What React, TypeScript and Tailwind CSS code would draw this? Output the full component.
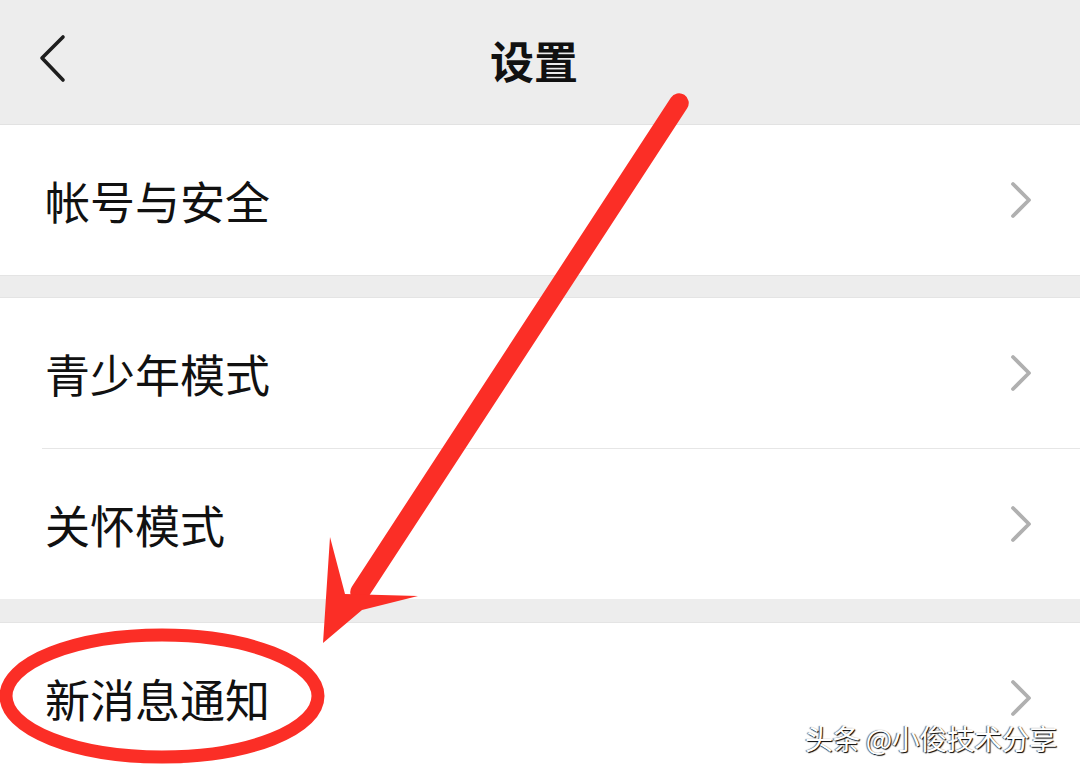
const font = { fontFamily: '"Noto Sans CJK SC", "Noto Sans", sans-serif' };

const Chevron = () => (
  <svg width="24" height="40" viewBox="0 0 24 40">
    <path d="M4 4 L20 20 L4 36" fill="none" stroke="#b0b0b0" strokeWidth="3.8" strokeLinecap="round" strokeLinejoin="round" />
  </svg>
);

const Row = ({ label }: { label: string }) => (
  <div className="h-[150px] bg-white flex items-center justify-between pl-[45px] pr-[47px]">
    <span className="text-[45px] text-[#111] leading-none">{label}</span>
    <Chevron />
  </div>
);

const App = () => {
  return (
    <div className="relative w-[1080px] h-[773px] overflow-hidden bg-[#ededed]" style={font}>
      <header className="h-[125px] bg-[#ededed] border-b border-[#e2e2e2] flex items-center justify-center relative">
        <svg className="absolute left-[38px] top-[34px]" width="30" height="50" viewBox="0 0 30 50">
          <path d="M25 3 L4 24 L25 46" fill="none" stroke="#1e1e1e" strokeWidth="3.6" strokeLinecap="round" strokeLinejoin="round" />
        </svg>
        <h1 className="text-[44px] font-semibold text-[#111] leading-none mt-[-5px] mr-[12px]">设置</h1>
      </header>

      <Row label="帐号与安全" />
      <div className="h-[23px] bg-[#ededed] border-t border-b border-[#e4e4e4]" />
      <Row label="青少年模式" />
      <div className="h-px bg-white">
        <div className="ml-[42px] h-px bg-[#e6e6e6]" />
      </div>
      <Row label="关怀模式" />
      <div className="h-[24px] bg-[#ededed] border-b border-[#e4e4e4]" />
      <Row label="新消息通知" />

      <svg className="absolute inset-0 pointer-events-none" width="1080" height="773" viewBox="0 0 1080 773">
        <line x1="679" y1="103" x2="360" y2="592" stroke="#fb2e26" strokeWidth="19.5" strokeLinecap="round" />
        <polygon points="323,643 330,537 345,594 418,596 362,610" fill="#fb2e26" />
        <ellipse cx="162" cy="696" rx="156" ry="61" fill="none" stroke="#fb2e26" strokeWidth="13" />
      </svg>

      <div
        className="absolute left-[805px] top-[724px] text-[28px] leading-none text-white tracking-[-0.5px]"
        style={{ textShadow: "1px 1px 1px #000, -1px 0 1px rgba(0,0,0,0.6)" }}
      >
        头条 @小俊技术分享
      </div>
    </div>
  );
};

export default App;
